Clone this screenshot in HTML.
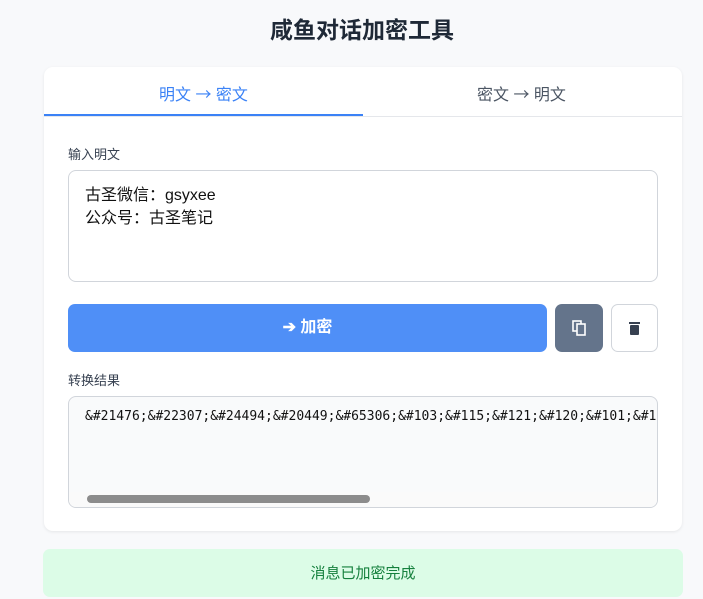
<!DOCTYPE html>
<html><head><meta charset="utf-8"><style>
*{box-sizing:border-box;margin:0;padding:0}
body{width:703px;height:594px;background:#f8f9fb;font-family:"Liberation Sans","Noto Sans CJK SC",sans-serif;position:relative;overflow:hidden}
h1{position:absolute;top:11px;left:0;width:724px;text-align:center;font-size:23px;font-weight:bold;color:#1f2937}
.card{position:absolute;left:44px;top:67px;width:638px;height:464px;background:#fff;border-radius:9px;box-shadow:0 1px 3px rgba(0,0,0,.08)}
.tabs{height:50px;border-bottom:1px solid #e5e7eb;position:relative}
.tab{position:absolute;top:14px;font-size:16px}
.ar{font-family:"Noto Sans CJK SC",sans-serif}
.ul{position:absolute;left:0;top:47px;width:319px;height:2px;background:#3b82f6}
.lbl{position:absolute;font-size:13px;color:#374151}
.ta{position:absolute;left:24px;top:103px;width:590px;height:112px;border:1px solid #d1d5db;border-radius:8px;padding:13px 16px;font-size:16px;line-height:23px;color:#111}
.btn{position:absolute;top:237px;height:48px;border-radius:7px}
.res{position:absolute;left:24px;top:329px;width:590px;height:112px;border:1px solid #d1d5db;border-radius:8px;background:#f9fafb;overflow:hidden}
.res pre{font-family:"DejaVu Sans Mono","Liberation Mono",monospace;font-size:13px;padding:12px 16px;color:#111;white-space:pre}
.toast{position:absolute;left:43px;top:549px;width:640px;height:48px;background:#dcfce7;border-radius:7px;text-align:center;line-height:50px;font-size:15px;color:#15803d}
</style></head><body>
<h1>咸鱼对话加密工具</h1>
<div class="card">
<div class="tabs"><span class="tab" style="left:115px;color:#3b82f6">明文 <span class="ar">→</span> 密文</span><span class="tab" style="left:433px;color:#4b5563">密文 <span class="ar">→</span> 明文</span><div class="ul"></div></div>
<div class="lbl" style="left:24px;top:77px">输入明文</div>
<div class="ta">古圣微信：gsyxee<br>公众号：古圣笔记</div>
<div class="btn" style="left:24px;width:479px;background:#4f8ff7;color:#fff;text-align:center;line-height:48px;font-size:16px;font-weight:bold">➔ 加密</div>
<div class="btn" style="left:511px;width:48px;background:#64748b"><svg width="48" height="48"><rect x="18" y="17" width="8" height="10" fill="none" stroke="#fff" stroke-width="1.6"/><rect x="22" y="20" width="8" height="11" fill="#64748b" stroke="#fff" stroke-width="1.6"/></svg></div>
<div class="btn" style="left:567px;width:47px;background:#fff;border:1px solid #d1d5db"><svg width="46" height="46"><rect x="17" y="17" width="11" height="2" fill="#374151"/><rect x="18" y="20" width="9" height="10" rx="1" fill="#374151"/></svg></div>
<div class="lbl" style="left:24px;top:303px">转换结果</div>
<div class="res"><pre>&amp;#21476;&amp;#22307;&amp;#24494;&amp;#20449;&amp;#65306;&amp;#103;&amp;#115;&amp;#121;&amp;#120;&amp;#101;&amp;#101;</pre>
<div style="position:absolute;left:0;bottom:0;width:100%;height:15px;background:#fafafa"></div>
<div style="position:absolute;left:18px;bottom:4px;width:283px;height:8px;background:#8c8c8c;border-radius:4px"></div></div>
</div>
<div class="toast">消息已加密完成</div>
</body></html>
